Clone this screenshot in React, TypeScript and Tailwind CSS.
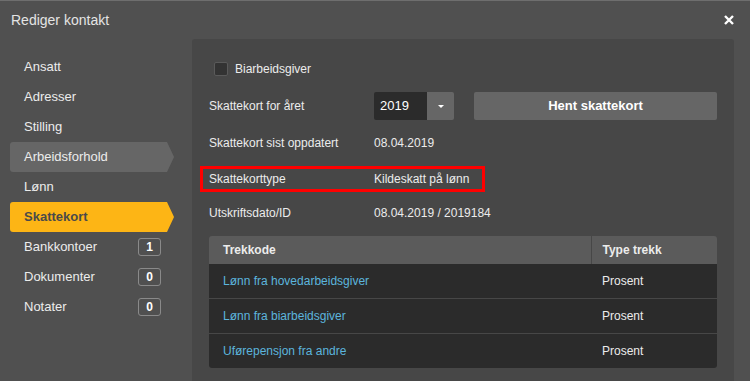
import React from 'react'

type NavItem = { label: string; badge?: number; state?: 'hover' | 'active' }

const navItems: NavItem[] = [
    { label: 'Ansatt' },
    { label: 'Adresser' },
    { label: 'Stilling' },
    { label: 'Arbeidsforhold', state: 'hover' },
    { label: 'Lønn' },
    { label: 'Skattekort', state: 'active' },
    { label: 'Bankkontoer', badge: 1 },
    { label: 'Dokumenter', badge: 0 },
    { label: 'Notater', badge: 0 },
]

const trekk = [
    { kode: 'Lønn fra hovedarbeidsgiver', type: 'Prosent' },
    { kode: 'Lønn fra biarbeidsgiver', type: 'Prosent' },
    { kode: 'Uførepensjon fra andre', type: 'Prosent' },
]

const Sidebar: React.FC = () => (
    <nav className="w-[192px] shrink-0 pt-[13px]">
        <ul>
            {navItems.map((item) => {
                const shape =
                    item.state === 'hover'
                        ? 'bg-[#666666] text-[#ececec]'
                        : item.state === 'active'
                          ? 'bg-[#fdb515] text-[#4a4a4a] font-bold'
                          : 'text-[#ececec]'
                return (
                    <li
                        key={item.label}
                        className={`ml-[10px] flex h-[30px] w-[164px] items-center justify-between rounded-l-[3px] pl-[14px] pr-[13px] text-[13px] [clip-path:polygon(0_0,calc(100%-7px)_0,100%_50%,calc(100%-7px)_100%,0_100%)] ${shape}`}
                    >
                        <span>{item.label}</span>
                        {item.badge !== undefined && (
                            <span className="flex h-[18px] w-[23px] items-center justify-center rounded-[3px] border border-[#8a8a8a] text-[12px] font-bold text-white">
                                {item.badge}
                            </span>
                        )}
                    </li>
                )
            })}
        </ul>
    </nav>
)

const Row: React.FC<{ label: string; value: string; className?: string }> = ({
    label,
    value,
    className = '',
}) => (
    <div className={`flex h-[26px] items-center text-[12px] text-[#ececec] ${className}`}>
        <span className="w-[165px] shrink-0">{label}</span>
        <span>{value}</span>
    </div>
)

export default function App() {
    return (
        <div className="flex h-[381px] w-[750px] flex-col overflow-hidden border-t border-[#6e6e6e] bg-[#505050] font-['Liberation_Sans',Arial,sans-serif]">
            <header className="flex h-[38px] shrink-0 items-center justify-between pl-[11px] pr-[16px]">
                <h1 className="text-[14px] text-[#e4e4e4]">Rediger kontakt</h1>
                <svg className="h-[10px] w-[10px]" viewBox="0 0 10 10" aria-hidden="true">
                    <path d="M1 1 9 9M9 1 1 9" stroke="#ffffff" strokeWidth="2.4" />
                </svg>
            </header>

            <div className="flex min-h-0 flex-1">
                <Sidebar />

                <main className="mr-[16px] flex-1 rounded-t-[3px] bg-[#474747] px-[17px] pt-[16px]">
                    <label className="flex h-[28px] items-center gap-[7px] pl-[5px] text-[12px] text-[#ececec]">
                        <span className="h-[14px] w-[14px] rounded-[2px] border border-[#5a5a5a] bg-[#333333]" />
                        Biarbeidsgiver
                    </label>

                    <div className="mt-[9px] flex h-[28px] items-center text-[12px] text-[#ececec]">
                        <span className="w-[165px] shrink-0">Skattekort for året</span>
                        <div className="flex h-[28px] w-[80px] overflow-hidden rounded-[2px]">
                            <span className="flex flex-1 items-center bg-[#2b2b2b] pl-[6px] text-[13px] text-white">
                                2019
                            </span>
                            <span className="flex w-[27px] items-center justify-center bg-[#666666]">
                                <svg className="h-[3px] w-[6px]" viewBox="0 0 6 3" aria-hidden="true">
                                    <path d="M0 0h6L3 3z" fill="#ffffff" />
                                </svg>
                            </span>
                        </div>
                        <button className="ml-[20px] h-[28px] flex-1 rounded-[2px] bg-[#666666] text-[13px] font-bold text-white">
                            Hent skattekort
                        </button>
                    </div>

                    <Row className="mt-[10px]" label="Skattekort sist oppdatert" value="08.04.2019" />

                    <div className="-ml-[9px] mt-[10px] flex h-[26px] w-[285px] items-center border-[3px] border-[#ff0000] pl-[6px] text-[12px] text-[#ececec]">
                        <span className="w-[165px] shrink-0">Skattekorttype</span>
                        <span>Kildeskatt på lønn</span>
                    </div>

                    <Row className="mt-[8px]" label="Utskriftsdato/ID" value="08.04.2019 / 2019184" />

                    <table className="mt-[10px] w-full border-collapse overflow-hidden rounded-[3px] text-[12px]">
                        <thead>
                            <tr className="h-[28px] bg-[#5b5b5b] text-left font-bold text-[#ececec]">
                                <th className="w-[382px] border-r border-[#474747] pl-[14px]">Trekkode</th>
                                <th className="pl-[11px]">Type trekk</th>
                            </tr>
                        </thead>
                        <tbody>
                            {trekk.map((t, i) => (
                                <tr
                                    key={t.kode}
                                    className={`bg-[#2b2b2b] ${i > 0 ? 'h-[35px] border-t border-[#474747]' : 'h-[34px]'}`}
                                >
                                    <td className="pl-[14px] text-[#5cb5dd]">{t.kode}</td>
                                    <td className="pl-[11px] text-[#ececec]">{t.type}</td>
                                </tr>
                            ))}
                        </tbody>
                    </table>
                </main>
            </div>
        </div>
    )
}
